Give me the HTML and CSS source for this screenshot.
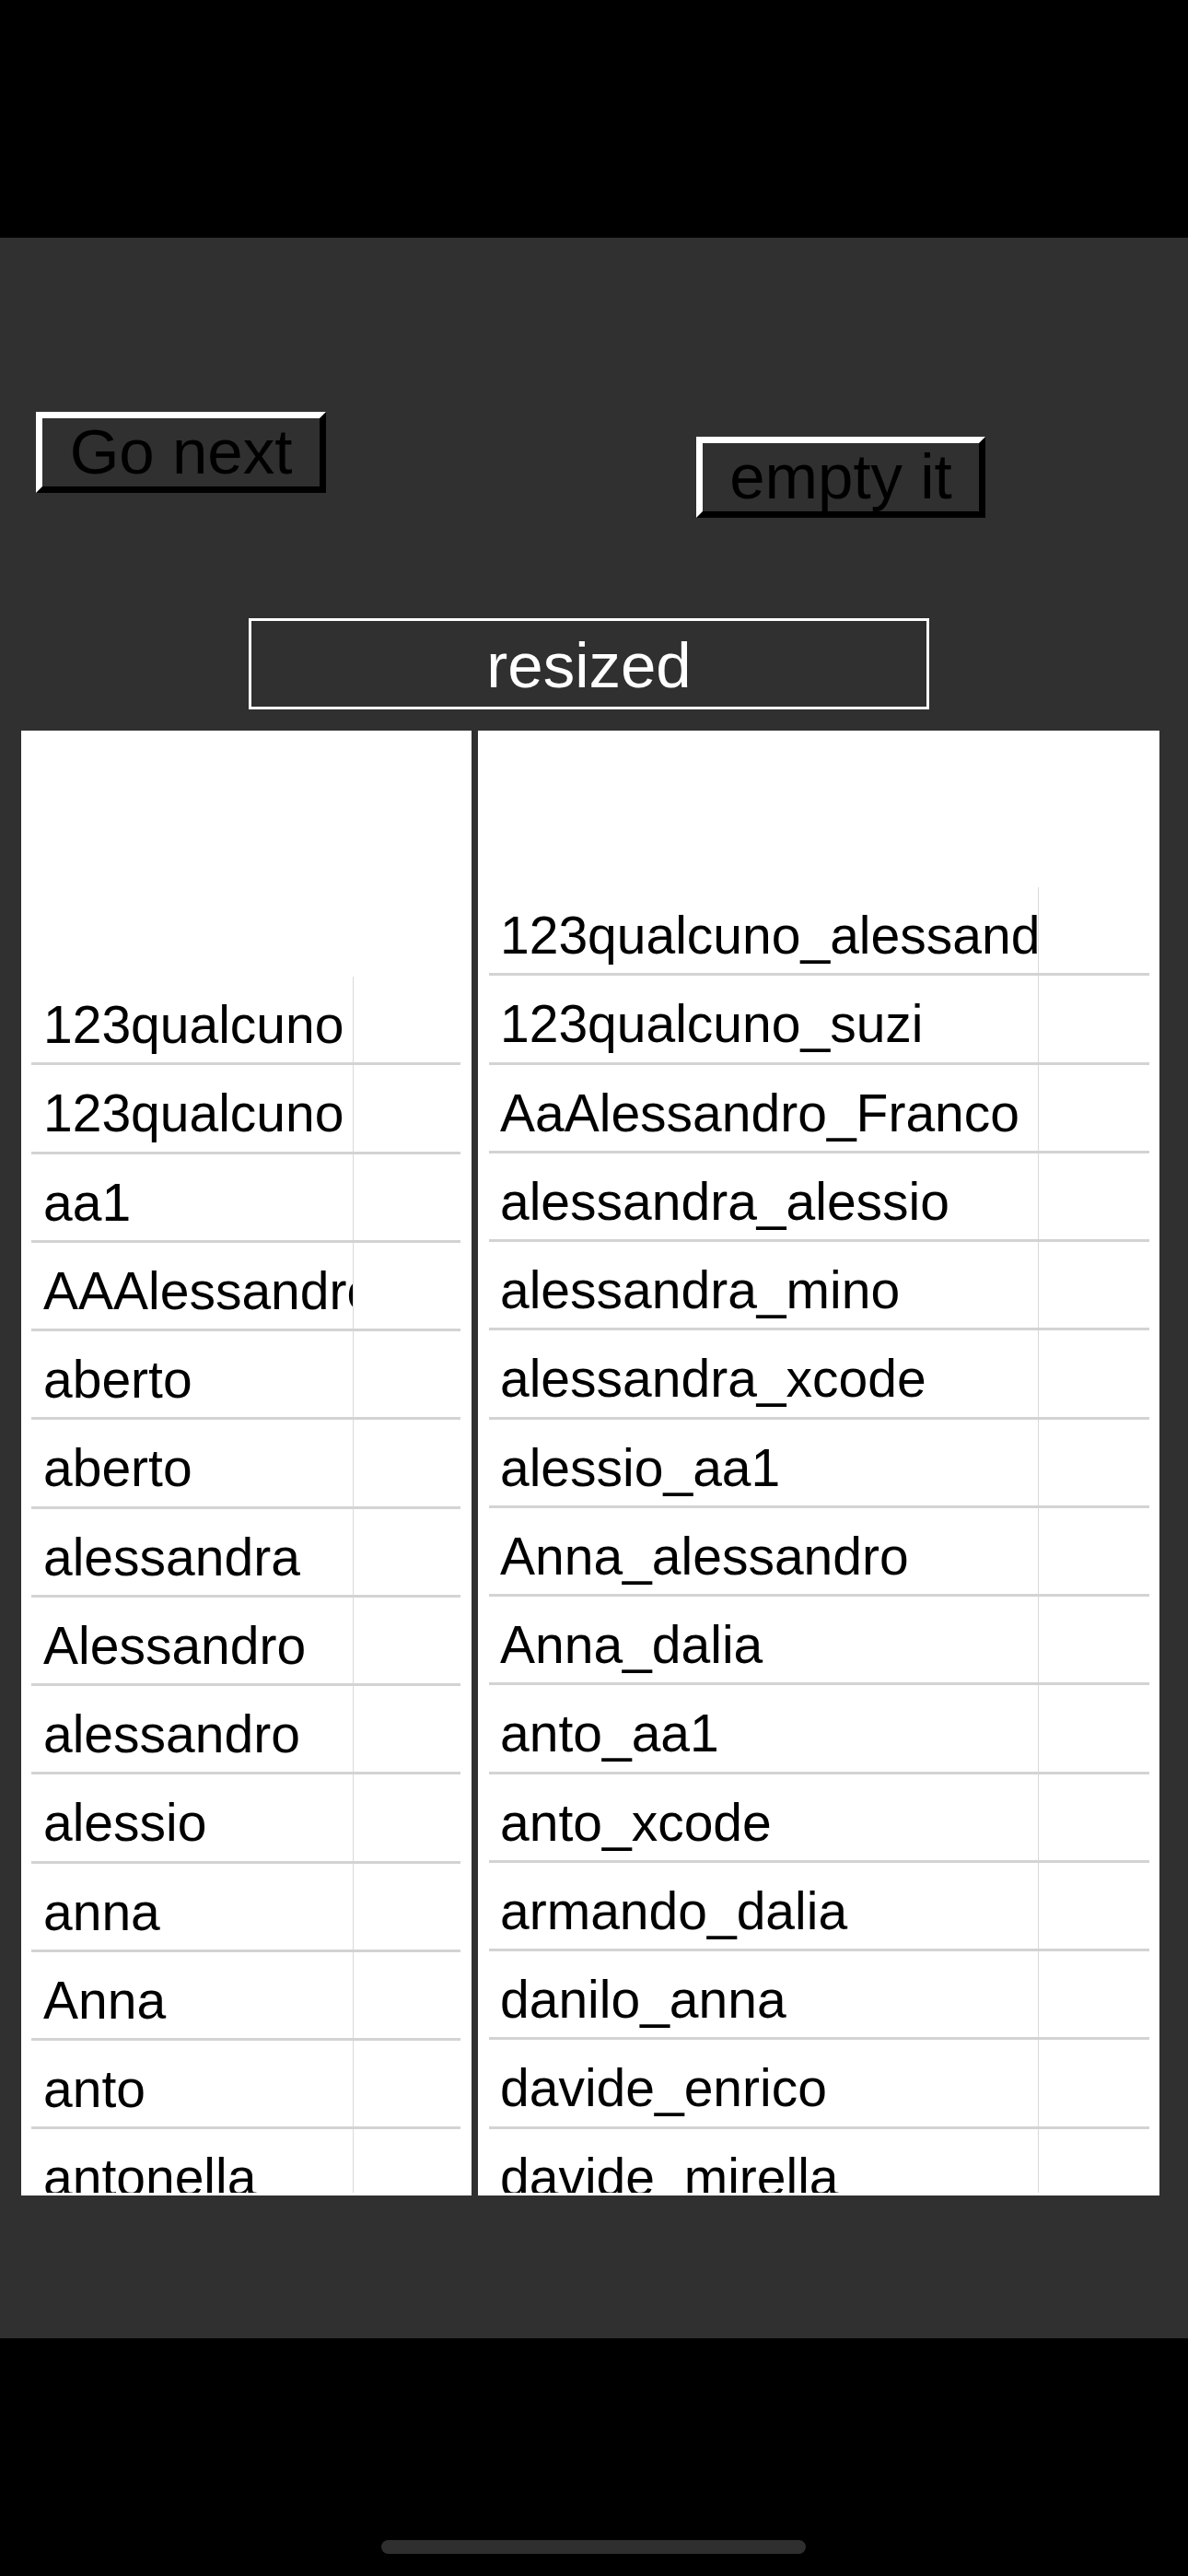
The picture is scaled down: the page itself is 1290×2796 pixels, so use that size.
FILE: index.html
```html
<!DOCTYPE html>
<html lang="it">
<head>
<meta charset="utf-8">
<title>List</title>
<link rel="stylesheet" href="styles.css">
</head>
<body>
<div class="screen">
  <div class="statusbar"></div>
  <main class="main">
    <div class="btnrow">
      <button class="btn btn-go">Go next</button>
      <button class="btn btn-empty">empty it</button>
    </div>
    <div class="resized">resized</div>
    <div class="panels">
      <section class="panel panel-left">
        <div class="list list-left">
          <div class="row"><div class="cell cell-left">123qualcuno</div><div class="rest"></div></div>
          <div class="row"><div class="cell cell-left">123qualcuno</div><div class="rest"></div></div>
          <div class="row"><div class="cell cell-left">aa1</div><div class="rest"></div></div>
          <div class="row"><div class="cell cell-left">AAAlessandro</div><div class="rest"></div></div>
          <div class="row"><div class="cell cell-left">aberto</div><div class="rest"></div></div>
          <div class="row"><div class="cell cell-left">aberto</div><div class="rest"></div></div>
          <div class="row"><div class="cell cell-left">alessandra</div><div class="rest"></div></div>
          <div class="row"><div class="cell cell-left">Alessandro</div><div class="rest"></div></div>
          <div class="row"><div class="cell cell-left">alessandro</div><div class="rest"></div></div>
          <div class="row"><div class="cell cell-left">alessio</div><div class="rest"></div></div>
          <div class="row"><div class="cell cell-left">anna</div><div class="rest"></div></div>
          <div class="row"><div class="cell cell-left">Anna</div><div class="rest"></div></div>
          <div class="row"><div class="cell cell-left">anto</div><div class="rest"></div></div>
          <div class="row"><div class="cell cell-left">antonella</div><div class="rest"></div></div>
        </div>
      </section>
      <section class="panel panel-right">
        <div class="list list-right">
          <div class="row"><div class="cell cell-right">123qualcuno_alessandro</div><div class="rest"></div></div>
          <div class="row"><div class="cell cell-right">123qualcuno_suzi</div><div class="rest"></div></div>
          <div class="row"><div class="cell cell-right">AaAlessandro_Franco</div><div class="rest"></div></div>
          <div class="row"><div class="cell cell-right">alessandra_alessio</div><div class="rest"></div></div>
          <div class="row"><div class="cell cell-right">alessandra_mino</div><div class="rest"></div></div>
          <div class="row"><div class="cell cell-right">alessandra_xcode</div><div class="rest"></div></div>
          <div class="row"><div class="cell cell-right">alessio_aa1</div><div class="rest"></div></div>
          <div class="row"><div class="cell cell-right">Anna_alessandro</div><div class="rest"></div></div>
          <div class="row"><div class="cell cell-right">Anna_dalia</div><div class="rest"></div></div>
          <div class="row"><div class="cell cell-right">anto_aa1</div><div class="rest"></div></div>
          <div class="row"><div class="cell cell-right">anto_xcode</div><div class="rest"></div></div>
          <div class="row"><div class="cell cell-right">armando_dalia</div><div class="rest"></div></div>
          <div class="row"><div class="cell cell-right">danilo_anna</div><div class="rest"></div></div>
          <div class="row"><div class="cell cell-right">davide_enrico</div><div class="rest"></div></div>
          <div class="row"><div class="cell cell-right">davide_mirella</div><div class="rest"></div></div>
        </div>
      </section>
    </div>
  </main>
  <div class="bottombar"><div class="home-indicator"></div></div>
</div>
</body>
</html>
```
FILE: styles.css
```css
html, body {
  margin: 0;
  padding: 0;
  background: #000;
}

body {
  font-family: "Liberation Sans", Arial, sans-serif;
}

.screen {
  width: 1290px;
  height: 2796px;
  display: flex;
  flex-direction: column;
  overflow: hidden;
}

.statusbar {
  height: 258px;
  flex: none;
  background: #000;
}

.main {
  height: 2280px;
  flex: none;
  box-sizing: border-box;
  background: #303030;
  padding-top: 189px;
  display: flex;
  flex-direction: column;
}

.btnrow {
  display: flex;
  align-items: flex-start;
  padding-left: 39px;
}

.btn {
  font-family: "Liberation Sans", Arial, sans-serif;
  font-size: 69px;
  line-height: 70px;
  color: #000;
  background: #303030;
  box-sizing: border-box;
  height: 88px;
  padding: 0;
  margin: 0;
  border-width: 7px;
  border-style: solid;
  border-color: #fff #000 #000 #fff;
  text-align: center;
  display: block;
}

.btn-go {
  width: 315px;
}

.btn-empty {
  width: 314px;
  margin-left: 402px;
  margin-top: 27px;
}

.resized {
  margin-top: 109px;
  margin-left: 270px;
  width: 739px;
  height: 99px;
  box-sizing: border-box;
  border: 3px solid #fff;
  padding-top: 14px;
  color: #fff;
  font-size: 69px;
  line-height: 70px;
  text-align: center;
}

.panels {
  margin-top: 23px;
  padding-left: 23px;
  display: flex;
  gap: 7px;
  height: 1590px;
}

.panel {
  background: #fff;
  box-sizing: border-box;
  padding-bottom: 3px;
  display: flex;
  flex-direction: column;
}

.panel-left {
  width: 489px;
  padding-left: 11px;
  padding-right: 12px;
}

.panel-right {
  width: 740px;
  padding-left: 12px;
  padding-right: 11px;
}

.list {
  flex: 1;
  overflow: hidden;
  box-sizing: border-box;
}

.list-left {
  padding-top: 267px;
}

.list-right {
  padding-top: 170px;
}

.row {
  height: 96.25px;
  box-sizing: border-box;
  border-bottom: 3px solid #d3d3d3;
  display: flex;
}

.cell {
  box-sizing: border-box;
  font-size: 57px;
  line-height: 57px;
  color: #000;
  white-space: nowrap;
  overflow: hidden;
  padding-top: 24px;
  border-right: 1px solid #d9d9d9;
  flex: none;
}

.cell-left {
  width: 350px;
  padding-left: 13px;
}

.cell-right {
  width: 597px;
  padding-left: 12px;
}

.rest {
  flex: 1;
}

.bottombar {
  height: 258px;
  flex: none;
  background: #000;
  padding-top: 219px;
  padding-left: 414px;
  box-sizing: border-box;
}

.home-indicator {
  width: 461px;
  height: 15px;
  border-radius: 8px;
  background: #2f2f2f;
}
```
